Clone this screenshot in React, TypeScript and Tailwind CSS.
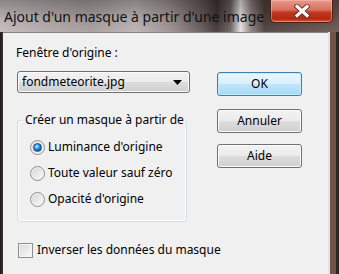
import { FC, ReactNode } from "react";

const font = { fontFamily: '"Noto Sans", "Open Sans", Arial, sans-serif' };

const Radio: FC<{ checked?: boolean; label: string }> = ({ checked, label }) => (
  <div className="flex items-center h-[16px] whitespace-nowrap">
    <span className="shrink-0 flex items-center justify-center w-[15px] h-[15px] rounded-full border border-[#8e8f8f] bg-[linear-gradient(135deg,#d4d4d4,#fafafa)] shadow-[inset_0_0_0_1px_#f2f2f2]">
      {checked && (
        <span className="w-[9px] h-[9px] rounded-full border border-[#1c4f86] bg-[radial-gradient(circle_at_40%_35%,#c9efff_0%,#3aa0e8_35%,#0f5aa8_70%,#083060_100%)]" />
      )}
    </span>
    <span className="ml-[3px] text-[12px] leading-[16px] text-black">{label}</span>
  </div>
);

const Button: FC<{ children: ReactNode; focused?: boolean }> = ({ children, focused }) => (
  <div
    className={
      focused
        ? "flex items-center justify-center w-[85px] h-[24px] rounded-[3px] border border-[#3c7fb1] bg-[linear-gradient(to_bottom,#eaf6fd_0%,#d9f0fc_50%,#bee6fd_51%,#a7d9f5_100%)] shadow-[inset_0_0_0_1px_#c8ecff] text-[12px] text-black"
        : "flex items-center justify-center w-[85px] h-[24px] rounded-[3px] border border-[#707070] bg-[linear-gradient(to_bottom,#f2f2f2_0%,#ebebeb_50%,#dddddd_51%,#cfcfcf_100%)] shadow-[inset_0_0_0_1px_#fcfcfc] text-[12px] text-black"
    }
  >
    {children}
  </div>
);

export default function App() {
  return (
    <div className="w-[339px] h-[274px] flex flex-col overflow-hidden" style={font}>
      {/* title bar */}
      <div className="relative h-[32px] shrink-0 bg-[linear-gradient(to_bottom,rgba(0,0,0,0.28),rgba(0,0,0,0.05)_60%,rgba(255,255,255,0.08)),linear-gradient(to_right,#c2baba_0%,#b0a7a7_14%,#a49b9b_26%,#bab2b2_40%,#9a9090_50%,#5e5454_60%,#3e3434_64%,#6a6060_68%,#e6e2e2_71%,#8a7e7c_74%,#4c3e3a_78%,#6a5450_100%)]">
        <div className="pl-[4px] pt-[7px] text-[14px] leading-[20px] text-[#111] whitespace-nowrap">
          Ajout d'un masque à partir d'une image
        </div>
        <div className="absolute left-[270px] top-0 w-[63px] h-[23px] rounded-b-[5px] border border-t-0 border-[#4a2018] bg-[linear-gradient(to_bottom,#e79a8c_0%,#d9705e_45%,#c23a22_55%,#b42810_85%,#d25a3a_100%)] shadow-[inset_0_0_0_1px_rgba(255,200,190,0.45)] flex items-center justify-center">
          <svg width="16" height="14" viewBox="0 0 16 14">
            <path d="M3 2.5 L13 11.5 M13 2.5 L3 11.5" stroke="#6a2a20" strokeWidth="5" strokeLinecap="square" />
            <path d="M3 2.5 L13 11.5 M13 2.5 L3 11.5" stroke="#ffffff" strokeWidth="3.2" strokeLinecap="square" />
          </svg>
        </div>
      </div>

      <div className="flex flex-1">
        {/* left frame */}
        <div className="w-[3px] bg-[linear-gradient(to_right,#1e1818,#3e3434)]" />

        {/* client area */}
        <div className="flex-1 flex bg-[#f0f0f0] border-t border-[#8a8282]">
          <div className="flex flex-col pl-[14px] w-[187px]">
            <div className="mt-[12px] -ml-[1px] text-[12px] leading-[16px] text-black whitespace-nowrap">Fenêtre d'origine :</div>

            <div className="mt-[10px] w-[173px] h-[22px] rounded-[3px] border border-[#707070] bg-[linear-gradient(to_bottom,#f2f2f2_0%,#ebebeb_50%,#dddddd_51%,#cfcfcf_100%)] shadow-[inset_0_0_0_1px_#fbfbfb] flex items-center justify-between pl-[4px] pr-[7px]">
              <span className="text-[12px] leading-[16px] text-black">fondmeteorite.jpg</span>
              <svg width="9" height="5" viewBox="0 0 9 5">
                <path d="M0 0 H9 L4.5 5 Z" fill="#000" />
              </svg>
            </div>

            <div className="relative mt-[27px] w-[170px] h-[102px] rounded-[3px] border border-[#d5dfe5] shadow-[inset_0_0_0_1px_#ffffff]">
              <span className="absolute -top-[9px] left-[5px] px-[2px] bg-[#f0f0f0] text-[12px] leading-[16px] text-black whitespace-nowrap">
                Créer un masque à partir de
              </span>
              <div className="flex flex-col pl-[12px] pt-[18px] gap-[10px]">
                <Radio checked label="Luminance d'origine" />
                <Radio label="Toute valeur sauf zéro" />
                <Radio label="Opacité d'origine" />
              </div>
            </div>

            <div className="mt-[20px] ml-[1px] flex items-center h-[16px] whitespace-nowrap">
              <span className="shrink-0 w-[15px] h-[15px] border border-[#8e8f8f] bg-[linear-gradient(135deg,#d8d8d8,#fbfbfb)] shadow-[inset_0_0_0_1px_#f4f4f4]" />
              <span className="ml-[4px] text-[12px] leading-[16px] text-black">Inverser les données du masque</span>
            </div>
          </div>

          <div className="flex flex-col ml-[27px] pt-[39px]">
            <Button focused>OK</Button>
            <div className="mt-[13px]">
              <Button>Annuler</Button>
            </div>
            <div className="mt-[11px]">
              <Button>Aide</Button>
            </div>
          </div>
        </div>

        {/* right frame */}
        <div className="w-[2px] bg-[#e8e2e0]" />
        <div className="w-[6px] bg-[#6e5449]" />
        <div className="w-[3px] bg-[#2e2622]" />
      </div>
    </div>
  );
}
